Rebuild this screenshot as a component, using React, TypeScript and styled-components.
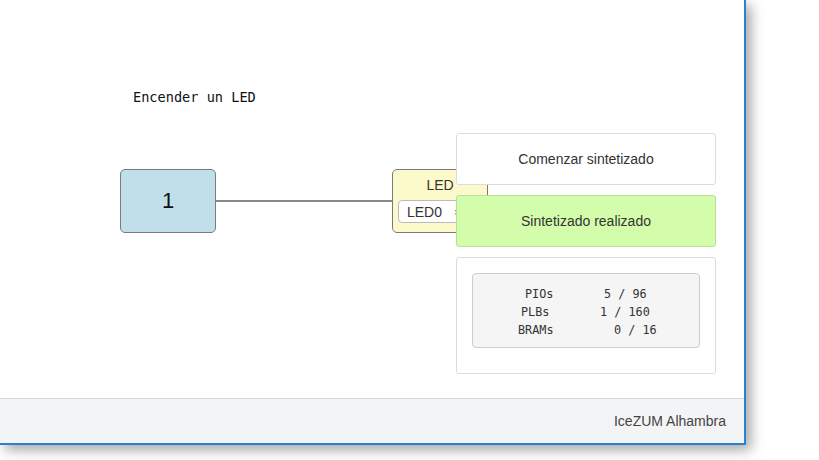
import React from 'react';
import styled, { createGlobalStyle } from 'styled-components';

const GlobalStyle = createGlobalStyle`
  html, body {
    margin: 0;
    padding: 0;
    background: #ffffff;
    font-family: 'Liberation Sans', Arial, sans-serif;
  }
`;

const Page = styled.div`
  width: 819px;
  height: 460px;
  overflow: hidden;
  background: #ffffff;
`;

const Window = styled.div`
  width: 744px;
  height: 443px;
  display: flex;
  flex-direction: column;
  background: #ffffff;
  border-right: 2px solid #2b7fd4;
  border-bottom: 2px solid #2b7fd4;
  box-shadow: 5px 5px 12px rgba(0, 0, 0, 0.35);
`;

const Canvas = styled.div`
  position: relative;
  flex: 1;
  overflow: hidden;
`;

const Footer = styled.div`
  height: 44px;
  display: flex;
  align-items: center;
  justify-content: flex-end;
  padding-right: 18px;
  background: #f3f4f6;
  border-top: 1px solid #d6d8da;
  font-size: 14px;
  color: #444;
`;

// diagram items sit on a free canvas
const Title = styled.div`
  position: absolute;
  left: 133px;
  top: 89px;
  font-family: 'DejaVu Sans Mono', 'Liberation Mono', monospace;
  font-size: 13.6px;
  color: #111;
`;

const Block = styled.div<{ $x: number; $bg: string }>`
  position: absolute;
  left: ${({ $x }) => $x}px;
  top: 169px;
  width: 94px;
  height: 62px;
  box-sizing: content-box;
  border: 1px solid #7a7a7a;
  border-radius: 5px;
  background: ${({ $bg }) => $bg};
`;

const Constant = styled(Block)`
  display: flex;
  align-items: center;
  justify-content: center;
  font-size: 22px;
  color: #111;
`;

const Output = styled(Block)`
  display: flex;
  flex-direction: column;
  align-items: center;
  padding-top: 7px;
  height: 55px;
  font-size: 14px;
  color: #333;
`;

const Select = styled.div`
  align-self: flex-start;
  margin: 7px 0 0 5px;
  width: 84px;
  height: 23px;
  display: flex;
  align-items: center;
  gap: 12px;
  padding-left: 8px;
  box-sizing: border-box;
  border: 1px solid #bbb;
  border-radius: 4px;
  background: #fff;
  color: #333;
`;

const Clear = styled.span`
  font-size: 11px;
  color: #a0522d;
`;

const Wire = styled.div`
  position: absolute;
  left: 216px;
  top: 200px;
  width: 176px;
  height: 2px;
  background: #888;
`;

// toolbox panels float over the canvas
const Panels = styled.div`
  position: absolute;
  left: 456px;
  top: 133px;
  width: 260px;
  display: flex;
  flex-direction: column;
  gap: 10px;
`;

const Panel = styled.div<{ $ok?: boolean }>`
  height: 52px;
  box-sizing: border-box;
  display: flex;
  align-items: center;
  justify-content: center;
  border: 1px solid ${({ $ok }) => ($ok ? '#b9df98' : '#dcdcdc')};
  border-radius: 3px;
  background: ${({ $ok }) => ($ok ? '#d3fdab' : '#ffffff')};
  font-size: 14px;
  color: #333;
`;

const StatsPanel = styled.div`
  height: 117px;
  box-sizing: border-box;
  padding: 15px;
  border: 1px solid #dcdcdc;
  border-radius: 3px;
  background: #fff;
`;

const Stats = styled.div`
  height: 75px;
  box-sizing: border-box;
  padding-top: 11px;
  border: 1px solid #cccccc;
  border-radius: 4px;
  background: #f5f5f5;
  font-family: 'DejaVu Sans Mono', 'Liberation Mono', monospace;
  font-size: 11.8px;
  color: #333;
`;

const StatRow = styled.div`
  display: flex;
  height: 18px;
  align-items: center;
`;

const Cell = styled.span<{ $indent: number }>`
  margin-left: ${({ $indent }) => $indent}px;
  white-space: pre;
`;

const CHAR = 7.1;

const rows = [
  { name: 'PIOs', nameX: 52, value: '5 / 96', valueX: 131 },
  { name: 'PLBs', nameX: 48, value: '1 / 160', valueX: 127 },
  { name: 'BRAMs', nameX: 45, value: '0 / 16', valueX: 141 },
];

export default function App() {
  return (
    <Page>
      <GlobalStyle />
      <Window>
        <Canvas>
          <Title>Encender un LED</Title>
          <Wire />
          <Constant $x={120} $bg="#c1dfea">1</Constant>
          <Output $x={392} $bg="#fcfacb">
            LED
            <Select>
              LED0
              <Clear>×</Clear>
            </Select>
          </Output>
          <Panels>
            <Panel>Comenzar sintetizado</Panel>
            <Panel $ok>Sintetizado realizado</Panel>
            <StatsPanel>
              <Stats>
                {rows.map((r) => (
                  <StatRow key={r.name}>
                    <Cell $indent={r.nameX}>{r.name}</Cell>
                    <Cell $indent={r.valueX - r.nameX - r.name.length * CHAR}>{r.value}</Cell>
                  </StatRow>
                ))}
              </Stats>
            </StatsPanel>
          </Panels>
        </Canvas>
        <Footer>IceZUM Alhambra</Footer>
      </Window>
    </Page>
  );
}
